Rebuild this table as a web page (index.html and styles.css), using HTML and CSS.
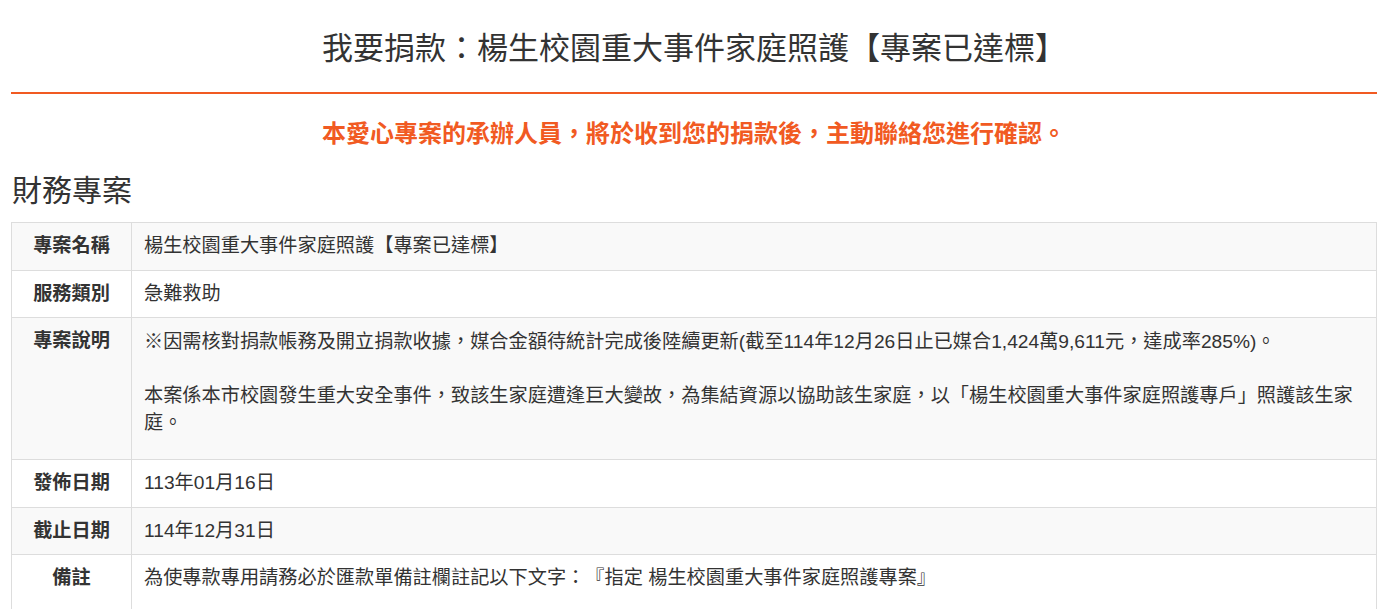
FILE: index.html
```html
<!DOCTYPE html>
<html lang="zh-Hant">
<head>
<meta charset="utf-8">
<title>我要捐款</title>
<link rel="stylesheet" href="styles.css">
</head>
<body>
<div class="page">
  <header class="page-header">
    <h1 class="page-title">我要捐款：楊生校園重大事件家庭照護【專案已達標】</h1>
  </header>
  <p class="notice">本愛心專案的承辦人員，將於收到您的捐款後，主動聯絡您進行確認。</p>
  <h2 class="section-title">財務專案</h2>
  <table class="info-table">
    <tbody>
      <tr>
        <th>專案名稱</th>
        <td>楊生校園重大事件家庭照護【專案已達標】</td>
      </tr>
      <tr>
        <th>服務類別</th>
        <td>急難救助</td>
      </tr>
      <tr>
        <th>專案說明</th>
        <td>
          <p class="desc">※因需核對捐款帳務及開立捐款收據，媒合金額待統計完成後陸續更新(截至114年12月26日止已媒合1,424萬9,611元，達成率285%)。</p>
          <p class="desc desc-last">本案係本市校園發生重大安全事件，致該生家庭遭逢巨大變故，為集結資源以協助該生家庭，以「楊生校園重大事件家庭照護專戶」照護該生家庭。</p>
        </td>
      </tr>
      <tr>
        <th>發佈日期</th>
        <td>113年01月16日</td>
      </tr>
      <tr>
        <th>截止日期</th>
        <td>114年12月31日</td>
      </tr>
      <tr>
        <th>備註</th>
        <td class="tall">為使專款專用請務必於匯款單備註欄註記以下文字：『指定 楊生校園重大事件家庭照護專案』</td>
      </tr>
    </tbody>
  </table>
</div>
</body>
</html>
```

FILE: styles.css
```css
html, body {
  margin: 0;
  padding: 0;
  background: #fff;
}

body {
  font-family: "Liberation Sans", "Noto Sans CJK TC", sans-serif;
  color: #333;
  font-size: 19.2px;
  text-spacing-trim: space-all;
}

.page {
  padding: 0 8px 0 11px;
}

.page-header {
  padding-top: 32px;
  padding-bottom: 26px;
  border-bottom: 2px solid #f15a22;
}

.page-title {
  margin: 0;
  text-align: center;
  font-size: 31px;
  line-height: 34px;
  font-weight: normal;
  color: #333;
}

.notice {
  margin: 24px 0 0;
  text-align: center;
  color: #f15a22;
  font-size: 24px;
  line-height: 32px;
  font-weight: bold;
}

.section-title {
  margin: 23px 0 0;
  font-size: 30px;
  line-height: 36px;
  font-weight: normal;
  color: #333;
  padding-left: 1px;
}

.info-table {
  margin-top: 13px;
  width: 100%;
  border-collapse: collapse;
  border: 1px solid #ddd;
}

.info-table th,
.info-table td {
  border: 1px solid #ddd;
  padding: 10px 12px;
  line-height: 26.5px;
  vertical-align: top;
}

.info-table th {
  width: 95px;
  text-align: center;
  font-weight: bold;
}

.info-table td {
  text-align: left;
}

.info-table tr:nth-child(odd) {
  background: #f9f9f9;
}

.info-table tr:nth-child(even) {
  background: #fff;
}

.desc {
  margin: 0 0 27px;
  line-height: 27px;
}

.desc-last {
  margin-bottom: 13px;
}

.tall {
  height: 60px;
}
```
